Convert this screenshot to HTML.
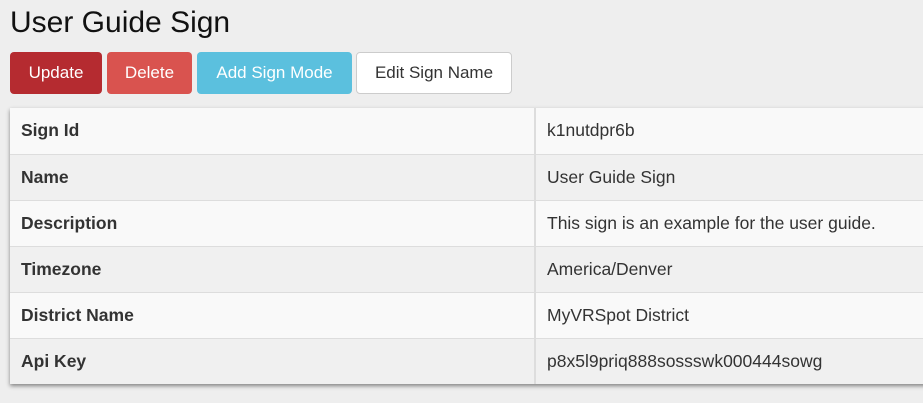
<!DOCTYPE html>
<html><head><style>
body{margin:0;width:923px;height:403px;overflow:hidden;background:#eeeeee;font-family:"Liberation Sans",sans-serif;color:#333;position:relative}
h1{position:absolute;left:10px;top:6px;margin:0;font-weight:normal;font-size:30px;color:#111}
.btn{position:absolute;top:52px;height:42px;border-radius:4px;box-sizing:border-box;font-size:17px;line-height:42px;text-align:center;color:#fff}
table{position:absolute;left:10px;top:108px;width:930px;border-collapse:collapse;box-shadow:0 2px 4px rgba(0,0,0,.45);font-size:17.5px}
td{height:46px;border-top:1px solid #ddd;padding:0 0 0 11px;box-sizing:border-box}
td:first-child{width:525px;font-weight:bold;border-right:2px solid #ddd;color:#333}
tr:nth-child(odd){background:#f9f9f9}
tr:nth-child(even){background:#f0f0f0}
tr:first-child td{border-top:none}
</style></head><body>
<h1>User Guide Sign</h1>
<div class="btn" style="left:10px;width:92px;background:#b52b30">Update</div>
<div class="btn" style="left:107px;width:85px;background:#d9534f">Delete</div>
<div class="btn" style="left:197px;width:155px;background:#5bc0de">Add Sign Mode</div>
<div class="btn" style="left:356px;width:156px;background:#fff;border:1px solid #ccc;color:#333;line-height:40px">Edit Sign Name</div>
<table>
<tr><td>Sign Id</td><td>k1nutdpr6b</td></tr>
<tr><td>Name</td><td>User Guide Sign</td></tr>
<tr><td>Description</td><td>This sign is an example for the user guide.</td></tr>
<tr><td>Timezone</td><td>America/Denver</td></tr>
<tr><td>District Name</td><td>MyVRSpot District</td></tr>
<tr><td>Api Key</td><td>p8x5l9priq888sossswk000444sowg</td></tr>
</table>
</body></html>
